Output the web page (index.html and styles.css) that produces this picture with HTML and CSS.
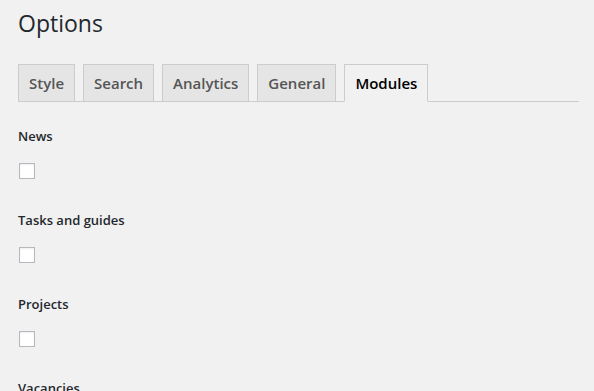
FILE: index.html
```html
<!DOCTYPE html>
<html>
<head>
<meta charset="utf-8">
<link rel="stylesheet" href="styles.css">
</head>
<body>
<div class="wrap">
  <h1 class="title">Options</h1>
  <nav class="tabs">
    <a class="tab">Style</a>
    <a class="tab">Search</a>
    <a class="tab">Analytics</a>
    <a class="tab">General</a>
    <a class="tab tab-active">Modules</a>
  </nav>
  <div class="fields">
    <div class="field">
      <div class="label">News</div>
      <span class="checkbox"></span>
    </div>
    <div class="field">
      <div class="label">Tasks and guides</div>
      <span class="checkbox"></span>
    </div>
    <div class="field">
      <div class="label">Projects</div>
      <span class="checkbox"></span>
    </div>
    <div class="field">
      <div class="label">Vacancies</div>
      <span class="checkbox"></span>
    </div>
  </div>
</div>
</body>
</html>
```

FILE: styles.css
```css
html, body {
  margin: 0;
  padding: 0;
  background: #f1f1f1;
  font-family: "Open Sans", "Liberation Sans", sans-serif;
  color: #23282d;
  overflow: hidden;
}
.wrap {
  padding: 0 15px 0 18px;
}
.title {
  margin: 0;
  padding: 9px 0 4px;
  font-size: 23px;
  line-height: 29px;
  font-weight: 400;
  color: #23282d;
}
.tabs {
  margin-top: 22px;
  display: flex;
  gap: 8px;
  border-bottom: 1px solid #ccc;
}
.tab {
  display: block;
  margin-bottom: -1px;
  padding: 6px 10px;
  font-size: 15px;
  line-height: 24px;
  font-weight: 600;
  color: #555;
  background: #e5e5e5;
  border: 1px solid #ccc;
}
.tab-active {
  background: #f1f1f1;
  color: #000;
  border-bottom-color: #f1f1f1;
}
.fields {
  padding-top: 24px;
  display: flex;
  flex-direction: column;
}
.field {
  height: 84px;
  display: flex;
  flex-direction: column;
  align-items: flex-start;
  gap: 17px;
}
.label {
  font-size: 13px;
  line-height: 20px;
  font-weight: 600;
  color: #23282d;
}
.checkbox {
  display: block;
  width: 14px;
  height: 14px;
  margin-left: 1px;
  background: #fff;
  border: 1px solid #b4b9be;
  box-shadow: inset 0 1px 2px rgba(0,0,0,0.07);
}
```
